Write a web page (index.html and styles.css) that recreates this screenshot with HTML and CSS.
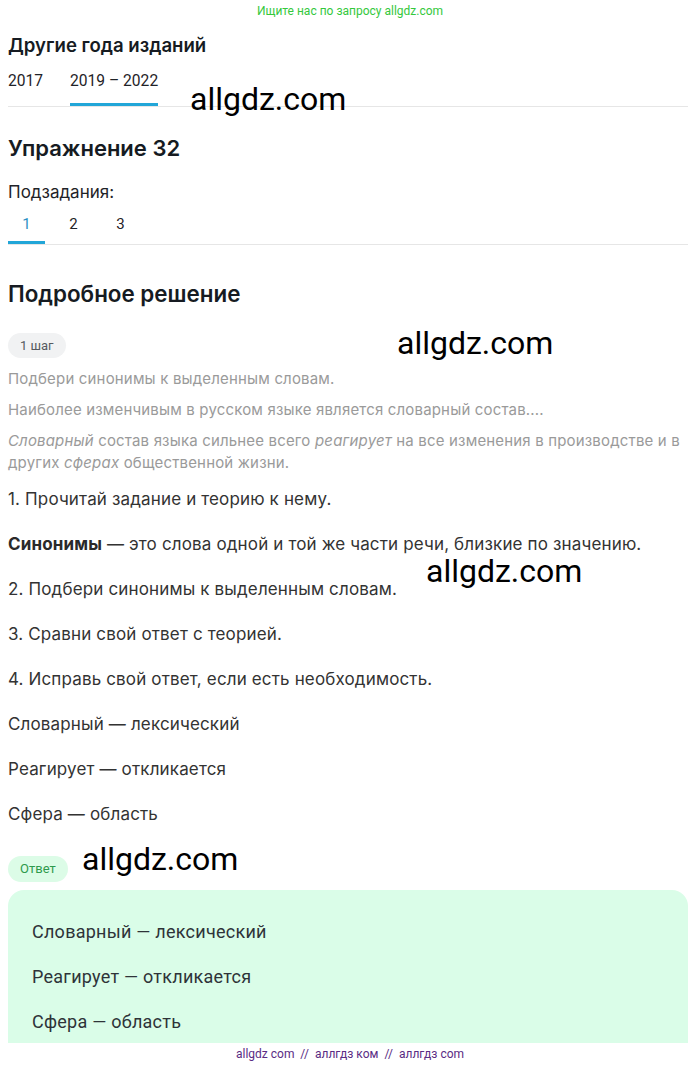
FILE: index.html
```html
<!DOCTYPE html>
<html lang="ru">
<head>
<meta charset="utf-8">
<title>Упражнение 32</title>
<link rel="stylesheet" href="styles.css">
</head>
<body>
<div class="topbar">Ищите нас по запросу allgdz.com</div>
<main class="page">
  <h2 class="h-years">Другие года изданий</h2>
  <nav class="tabs years">
    <span class="tab">2017</span>
    <span class="tab active">2019 – 2022</span>
  </nav>

  <h1 class="h-ex">Упражнение 32</h1>
  <div class="sub-label">Подзадания:</div>
  <nav class="tabs subtasks">
    <span class="tab num active">1</span>
    <span class="tab num">2</span>
    <span class="tab num">3</span>
  </nav>

  <h2 class="h-sol">Подробное решение</h2>
  <span class="pill step">1 шаг</span>
  <p class="muted first">Подбери синонимы к выделенным словам.</p>
  <p class="muted">Наиболее изменчивым в русском языке является словарный состав....</p>
  <p class="muted"><i>Словарный</i> состав языка сильнее всего <i>реагирует</i> на все изменения в производстве и в других <i>сферах</i> общественной жизни.</p>

  <p class="txt first">1. Прочитай задание и теорию к нему.</p>
  <p class="txt"><b>Синонимы</b> — это слова одной и той же части речи, близкие по значению.</p>
  <p class="txt">2. Подбери синонимы к выделенным словам.</p>
  <p class="txt">3. Сравни свой ответ с теорией.</p>
  <p class="txt">4. Исправь свой ответ, если есть необходимость.</p>
  <p class="txt">Словарный — лексический</p>
  <p class="txt">Реагирует — откликается</p>
  <p class="txt">Сфера — область</p>

  <span class="pill answer">Ответ</span>
  <section class="answer-box">
    <p class="ans">Словарный — лексический</p>
    <p class="ans">Реагирует — откликается</p>
    <p class="ans">Сфера — область</p>
  </section>
</main>
<footer class="footer">allgdz com &nbsp;//&nbsp; аллгдз ком &nbsp;//&nbsp; аллгдз com</footer>

<div class="wm wm1">allgdz.com</div>
<div class="wm wm2">allgdz.com</div>
<div class="wm wm3">allgdz.com</div>
<div class="wm wm4">allgdz.com</div>
</body>
</html>
```

FILE: styles.css
```css
html, body {
  margin: 0;
  padding: 0;
  background: #ffffff;
}
body {
  font-family: Inter, "Noto Sans", sans-serif;
  color: #333333;
  position: relative;
}
.topbar {
  height: 22px;
  line-height: 22px;
  text-align: center;
  font-family: Roboto, sans-serif;
  font-size: 12px;
  color: #34c83c;
}
.page {
  padding: 0 10px 0 8px;
  display: flex;
  flex-direction: column;
  align-items: flex-start;
}
.page > * { flex: none; }
.h-years {
  margin: 11px 0 0;
  font-size: 18.6px;
  line-height: 24px;
  font-weight: 600;
  color: #161b22;
}
.tabs {
  align-self: stretch;
  margin-right: 2px;
  display: flex;
  border-bottom: 1px solid #e6e6e6;
}
.tab {
  font-family: Roboto, sans-serif;
  color: #1f2328;
  border-bottom: 3px solid transparent;
}
.tab.active { border-bottom-color: #22a6d8; }
.years {
  margin-top: 12px;
  gap: 27px;
}
.years .tab {
  font-size: 15.6px;
  line-height: 24px;
  padding-bottom: 10px;
}
.h-ex {
  margin: 27px 0 0;
  font-size: 22px;
  line-height: 28px;
  font-weight: 600;
  color: #161b22;
}
.sub-label {
  margin-top: 19px;
  font-size: 17px;
  line-height: 22px;
  color: #1f2328;
}
.subtasks {
  margin-top: 10px;
  gap: 10px;
}
.subtasks .tab {
  width: 37px;
  text-align: center;
  font-size: 15px;
  line-height: 22px;
  padding-bottom: 6px;
}
.subtasks .tab.active { color: #2a8fc4; }
.h-sol {
  margin: 36px 0 0;
  font-size: 22.4px;
  line-height: 26px;
  font-weight: 600;
  color: #161b22;
}
.pill {
  display: inline-block;
  height: 25px;
  line-height: 25px;
  border-radius: 13px;
  padding: 0 12px;
  font-size: 13px;
}
.pill.step {
  margin-top: 26px;
  background: #f1f2f3;
  color: #555a60;
  font-family: Roboto, sans-serif;
}
.muted {
  margin: 9px 0 0;
  font-size: 15px;
  line-height: 22px;
  letter-spacing: 0.17px;
  color: #9a9a9a;
}
.muted.first { margin-top: 10px; }
.muted i { font-style: italic; }
.txt {
  margin: 21px 0 0;
  font-size: 17px;
  line-height: 24px;
  letter-spacing: 0.15px;
  color: #333333;
}
.txt.first { margin-top: 13px; }
.txt b { font-weight: 700; color: #2a2a2a; }
.pill.answer {
  margin-top: 30px;
  height: 26px;
  line-height: 26px;
  background: #dcfce7;
  color: #2e9a4c;
  font-family: Roboto, sans-serif;
}
.answer-box {
  margin-top: 8px;
  align-self: stretch;
  margin-right: 2px;
  background: #dafde8;
  border-radius: 16px 16px 0 0;
  padding: 9px 24px 9px;
}
.ans {
  margin: 21px 0 0;
  font-family: Roboto, sans-serif;
  font-size: 18px;
  line-height: 24px;
  letter-spacing: 0.25px;
  color: #2e3338;
}
.footer {
  height: 24px;
  line-height: 22px;
  text-align: center;
  font-family: Roboto, sans-serif;
  font-size: 12px;
  color: #5a2c84;
}
.wm {
  position: absolute;
  font-family: Roboto, sans-serif;
  font-size: 32px;
  line-height: 32px;
  color: #000000;
  white-space: nowrap;
}
.wm1 { left: 190px; top: 83px; }
.wm2 { left: 397px; top: 327px; }
.wm3 { left: 426px; top: 555px; }
.wm4 { left: 82px; top: 843px; }
```
